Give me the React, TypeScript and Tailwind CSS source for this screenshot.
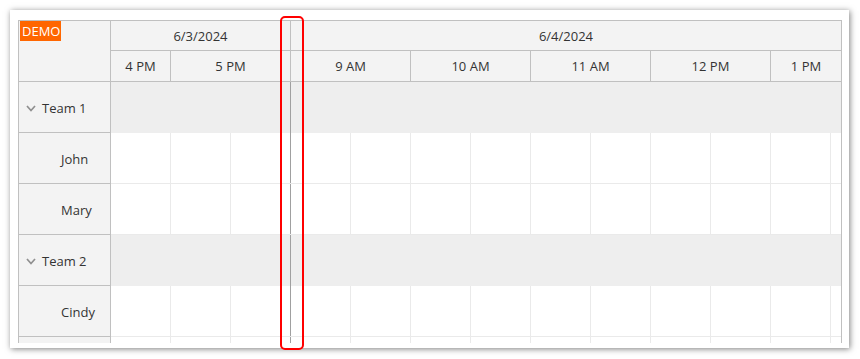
import React from 'react';

const font = { fontFamily: '"Segoe UI", "Open Sans", Arial, sans-serif' };

type Row = { name: string; group?: boolean };

const rows: Row[] = [
  { name: 'Team 1', group: true },
  { name: 'John' },
  { name: 'Mary' },
  { name: 'Team 2', group: true },
  { name: 'Cindy' },
  { name: '' },
];

const hours = [
  { label: '4 PM', w: 'w-[60px]' },
  { label: '5 PM', w: 'w-[120px]' },
  { label: '9 AM', w: 'w-[120px]' },
  { label: '10 AM', w: 'w-[120px]' },
  { label: '11 AM', w: 'w-[120px]' },
  { label: '12 PM', w: 'w-[120px]' },
];

const Chevron = () => (
  <svg width="10" height="7" viewBox="0 0 10 7" className="shrink-0">
    <polyline points="1,1 5,5.5 9,1" fill="none" stroke="#8f8f8f" strokeWidth="1.7" />
  </svg>
);

const RowHeader: React.FC<{ row: Row }> = ({ row }) => (
  <div className="h-[51px] shrink-0 border-b border-[#c0c0c0] bg-[#f3f3f3] flex items-center pt-[3px] text-[13px] text-[#333]">
    {row.group ? (
      <div className="flex items-center gap-[6px] pl-[7px]">
        <Chevron />
        <span>{row.name}</span>
      </div>
    ) : (
      <span className="pl-[42px]">{row.name}</span>
    )}
  </div>
);

const BodyRow: React.FC<{ row: Row }> = ({ row }) => {
  if (row.group) {
    return (
      <div className="h-[51px] shrink-0 flex bg-[#eeeeee]">
        <div className="w-[180px] shrink-0 border-r border-[#a0a0a0]" />
        <div className="flex-1" />
      </div>
    );
  }
  return (
    <div className="h-[51px] shrink-0 flex border-b border-[#eaeaea] bg-white">
      {Array.from({ length: 13 }).map((_, i) => (
        <div
          key={i}
          className={`w-[60px] shrink-0 border-r ${i === 2 ? 'border-[#a0a0a0]' : 'border-[#eaeaea]'}`}
        />
      ))}
    </div>
  );
};

export default function App() {
  return (
    <div className="relative w-[860px] h-[359px] bg-white p-[10px]" style={font}>
      <div className="w-[839px] h-[338px] bg-white shadow-[1px_1px_6px_rgba(0,0,0,0.5)] pt-[10px] pl-[8px] pr-[7px] pb-[5px]">
        <div className="h-full flex border-l border-t border-r border-[#c0c0c0] overflow-hidden">
          {/* Row headers */}
          <div className="w-[92px] shrink-0 border-r border-[#c0c0c0] flex flex-col">
            <div className="relative h-[61px] shrink-0 border-b border-[#c0c0c0] bg-[#f3f3f3]">
              <div className="absolute left-[1px] top-0 w-[41px] h-[20px] bg-[#ff6600] text-white text-[13px] leading-[20px] pl-[2px]">
                DEMO
              </div>
            </div>
            {rows.map((r, i) => (
              <RowHeader key={i} row={r} />
            ))}
          </div>

          {/* Grid */}
          <div className="flex-1 flex flex-col overflow-hidden">
            <div className="h-[30px] shrink-0 flex border-b border-[#c0c0c0] bg-[#f3f3f3] pt-[2px] text-[13px] text-[#333]">
              <div className="w-[180px] shrink-0 -mt-[2px] pt-[2px] border-r border-[#c0c0c0] flex items-center justify-center">
                6/3/2024
              </div>
              <div className="flex-1 flex items-center justify-center">6/4/2024</div>
            </div>
            <div className="h-[31px] shrink-0 flex border-b border-[#c0c0c0] bg-[#f3f3f3] text-[13px] text-[#333]">
              {hours.map((h) => (
                <div
                  key={h.label}
                  className={`${h.w} shrink-0 border-r border-[#c0c0c0] flex items-center justify-center pt-[2px]`}
                >
                  {h.label}
                </div>
              ))}
              <div className="flex-1 flex items-center justify-center pt-[2px]">1 PM</div>
            </div>
            {rows.map((r, i) => (
              <BodyRow key={i} row={r} />
            ))}
          </div>
        </div>
      </div>

      {/* highlight */}
      <div className="absolute left-[280px] top-[16px] w-[24px] h-[334px] border-[2.5px] border-[#ff0000] rounded-[5px]" />
    </div>
  );
}
